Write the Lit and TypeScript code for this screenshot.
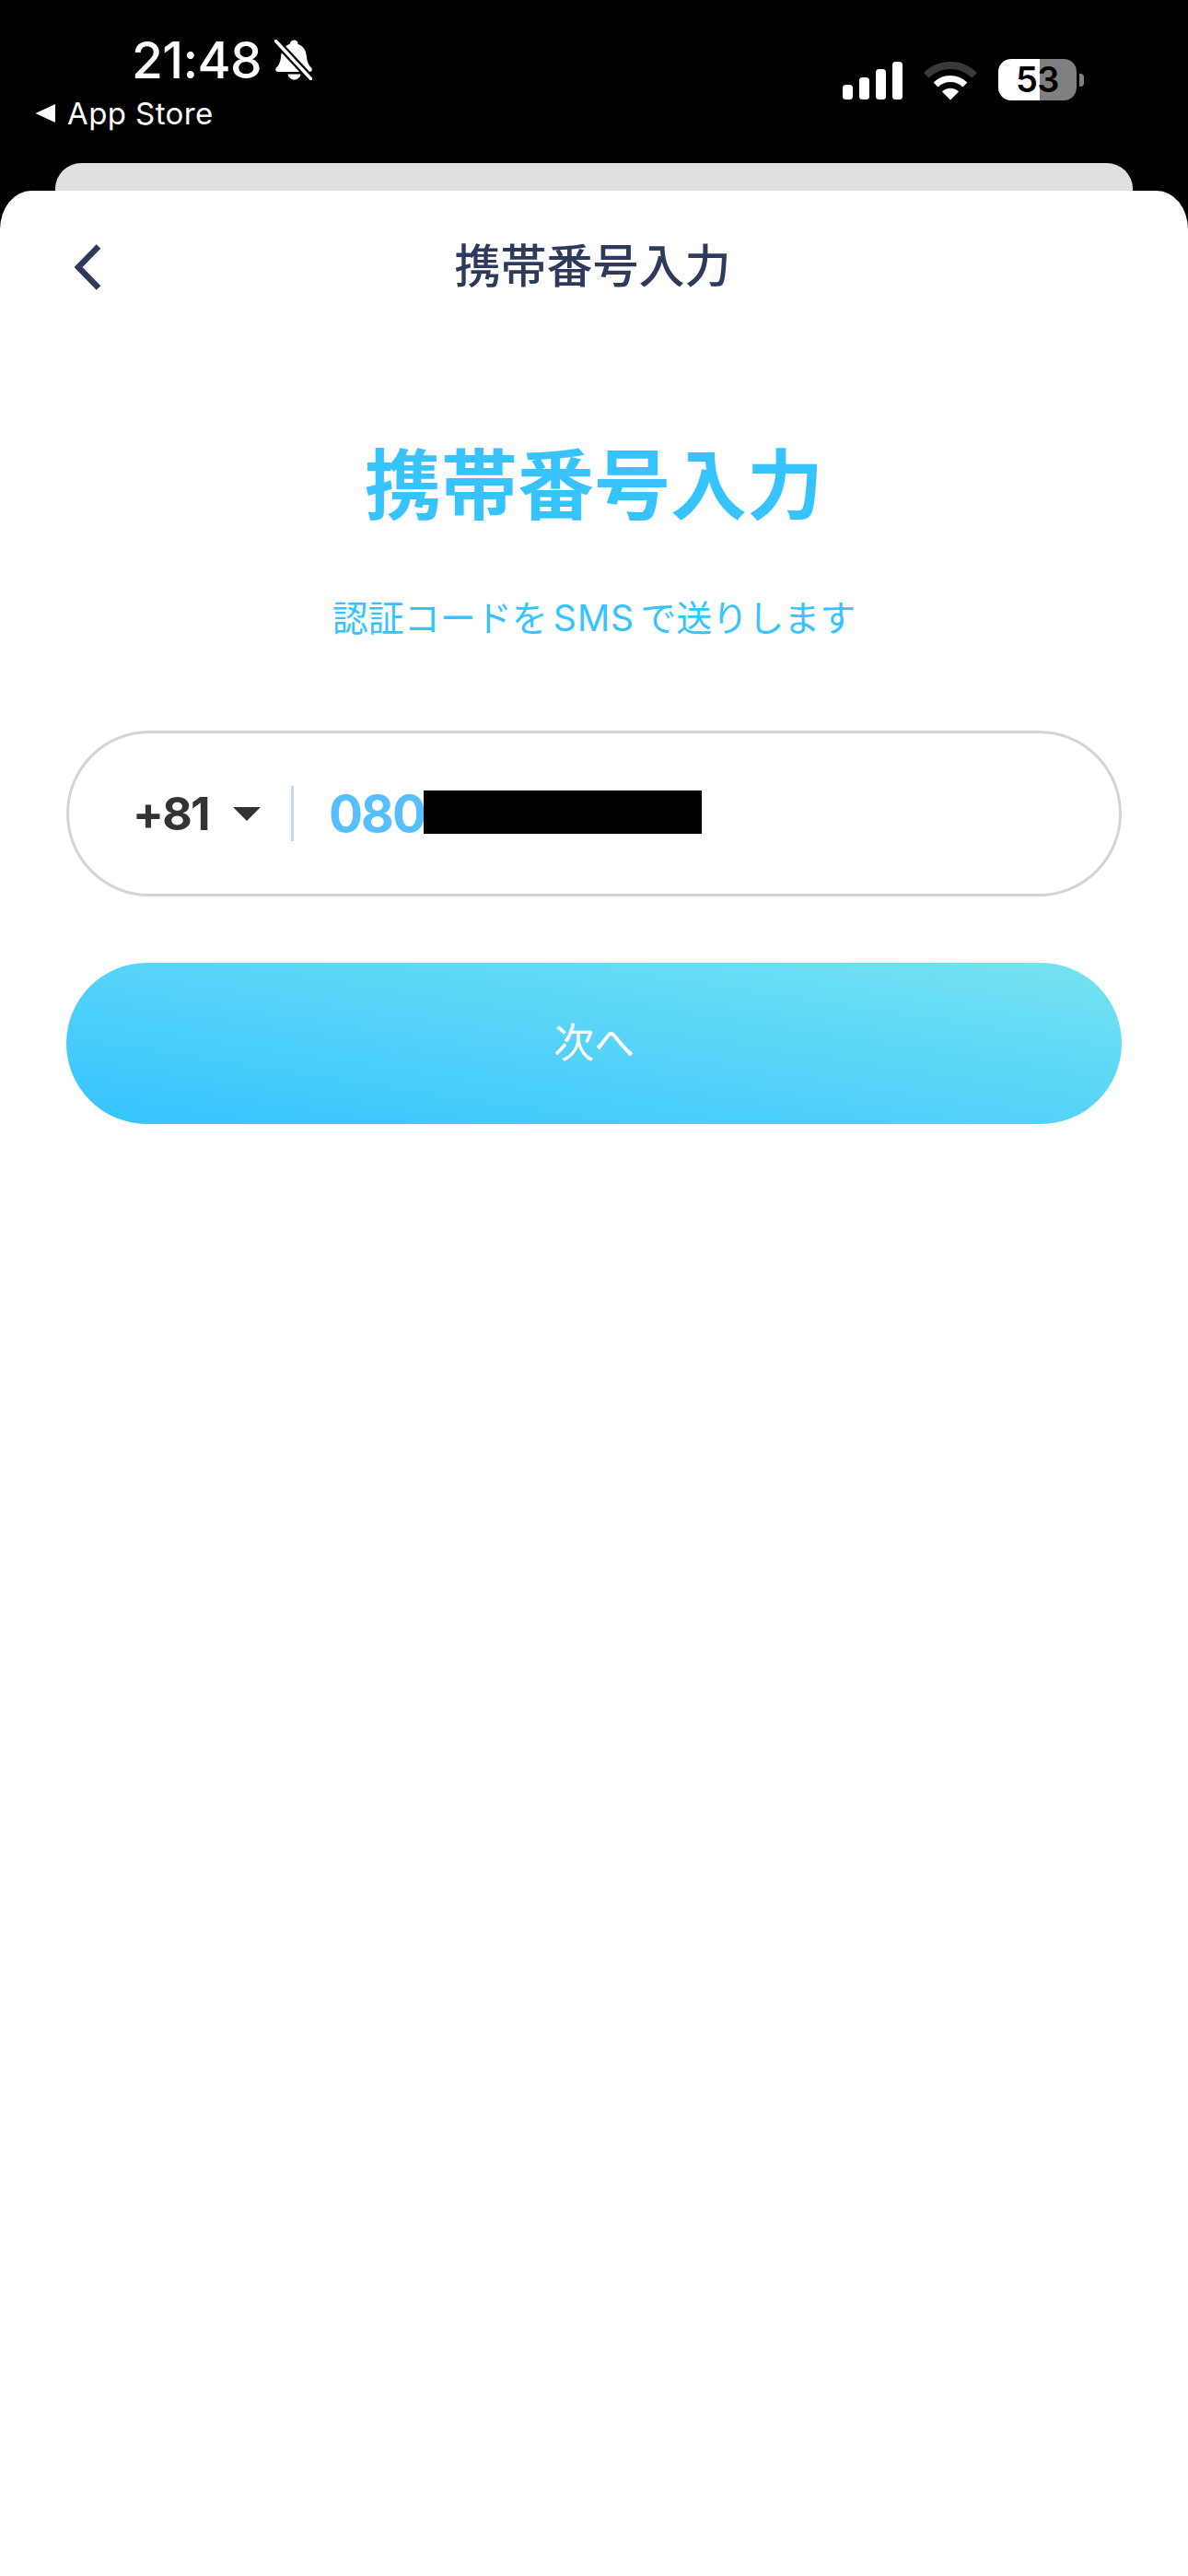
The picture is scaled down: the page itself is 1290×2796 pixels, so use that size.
import { LitElement, html, css } from "lit";
import { customElement } from "lit/decorators.js";

@customElement("app-root")
export class AppRoot extends LitElement {
  static styles = css`
    :host { display: block; width: 1290px; height: 2796px; background: #000; overflow: hidden; font-family: Inter, "Noto Sans CJK JP", sans-serif; }
    * { box-sizing: border-box; }
    .page { height: 2796px; display: flex; flex-direction: column; }
    .status { height: 177px; padding: 43px 113px 0 38px; display: flex; justify-content: space-between; align-items: flex-start; color: #fff; }
    .left { display: flex; flex-direction: column; }
    .time-row { display: flex; align-items: center; margin-left: 105px; height: 44px; gap: 14px; }
    .time { font-size: 55px; line-height: 44px; font-weight: 500; letter-spacing: -0.6px; }
    .back-row { display: flex; align-items: center; height: 30px; margin-top: 21px; gap: 13px; }
    .back-row span { font-size: 33px; line-height: 30px; font-weight: 400; letter-spacing: 0.4px; }
    .right { display: flex; align-items: center; margin-top: 21px; height: 45px; }
    .signal { margin-right: 23px; margin-top: 2px; }
    .wifi { margin-right: 23px; margin-top: 2px; }
    .battery { width: 85px; height: 45px; border-radius: 14px; background: linear-gradient(90deg, #fff 53%, #808080 53%); color: #000; font-size: 38px; font-weight: 600; line-height: 45px; text-align: center; letter-spacing: -0.5px; }
    .nub { width: 5px; height: 14px; margin-left: 3px; border-radius: 0 4px 4px 0; background: #808080; }
    .rear { height: 30px; margin: 0 60px; background: #e0e0e0; border-radius: 28px 28px 0 0; }
    .sheet { flex: 1; background: #fff; border-radius: 34px 34px 0 0 / 42px 42px 0 0; padding: 0 72px; display: flex; flex-direction: column; }
    .nav { height: 166px; display: grid; grid-template-columns: 1fr auto 1fr; align-items: center; margin: 0 -72px; padding: 0 84px 0 81px; }
    .nav-title { font-family: "Noto Sans CJK JP", sans-serif; font-size: 50px; font-weight: 500; color: #2d3a5c; line-height: 60px; padding-bottom: 10px; }
    h1 { margin: 98px 0 0; font-family: "Noto Sans CJK JP", sans-serif; font-size: 83px; line-height: 100px; font-weight: 700; color: #36c3ff; text-align: center; }
    .sub { margin-top: 72px; font-family: "Noto Sans CJK JP", sans-serif; font-size: 39px; line-height: 50px; font-weight: 400; color: #36c3ff; text-align: center; }
    .sub .lat { font-family: Inter, sans-serif; margin: 0 6px; letter-spacing: 1px; }
    .input { margin: 97px 0 0; height: 180px; border: 3px solid #d4d4d4; border-radius: 90px; display: flex; align-items: center; padding-left: 69px; }
    .cc { font-size: 50px; font-weight: 700; color: #333; line-height: 60px; width: 109px; letter-spacing: -1.8px; }
    .caret { margin-right: 33px; }
    .divider { width: 3px; height: 60px; background: #c5d8ea; margin-right: 38px; }
    .num { font-size: 55px; font-weight: 700; color: #55bfff; line-height: 60px; letter-spacing: -2px; }
    .redact { width: 302px; height: 47px; background: #000; margin: 0 0 3px -1px; }
    .btn { margin-top: 72px; height: 175px; border-radius: 88px; background: linear-gradient(to top right, #36c3ff 0%, #75e3f1 100%); display: flex; align-items: center; justify-content: center; padding-bottom: 8px; color: #fff; font-family: "Noto Sans CJK JP", sans-serif; font-size: 44px; font-weight: 400; }
  `;

  render() {
    return html`
      <div class="page">
        <div class="status">
          <div class="left">
            <div class="time-row">
              <span class="time">21:48</span>
              <svg width="41" height="44" viewBox="0 0 41 44" fill="#fff">
                <path d="M21.500 .5c-2.500 0-4.500 1.800-4.800 4.200C10 7 7.500 12.500 7 19c-.4 5-2 8.500-5 11.500-1.500 1.500-1 4.500 2 4.500H38c3 0 3.500-3 2-4.500-3-3-4.600-6.500-5-11.500-.5-6.500-3-12-9.700-14.300C25.900 2.300 24 .5 21.500 .5z"/>
                <path d="M14.500 37.500h14c-.5 3.500-3.500 6-7 6s-6.500-2.500-7-6z"/>
                <path d="M-2 -2L43 46" stroke="#000" stroke-width="8" fill="none"/>
                <path d="M1.500 1.500L39.500 42.500" stroke="#fff" stroke-width="3.500" stroke-linecap="round" fill="none"/>
              </svg>
            </div>
            <div class="back-row">
              <svg width="22" height="20" viewBox="0 0 22 20"><path d="M0.500 10L21 0.500C22 0 22 0.500 22 1.500V18.500C22 19.500 22 20 21 19.500Z" fill="#fff"/></svg>
              <span>App Store</span>
            </div>
          </div>
          <div class="right">
            <svg class="signal" width="65" height="41" viewBox="0 0 65 41" fill="#fff">
              <rect x="0" y="25" width="11" height="16" rx="3.500"/>
              <rect x="18" y="17" width="11" height="24" rx="3.500"/>
              <rect x="36" y="8" width="11" height="33" rx="3.500"/>
              <rect x="54" y="0" width="11" height="41" rx="3.500"/>
            </svg>
            <svg class="wifi" width="58" height="42" viewBox="0 0 58 42" fill="none">
              <path d="M2.800 14.800A37 37 0 0 1 55.200 14.800" stroke="#3a3a3a" stroke-width="8"/>
              <path d="M13.100 25.100A22.500 22.500 0 0 1 44.900 25.100" stroke="#fff" stroke-width="7"/>
              <path d="M29 41.500L20 32.500A12.700 12.700 0 0 1 38 32.500Z" fill="#fff"/>
            </svg>
            <div class="battery">53</div>
            <div class="nub"></div>
          </div>
        </div>
        <div class="rear"></div>
        <div class="sheet">
          <div class="nav">
            <svg width="29" height="50" viewBox="0 0 29 50" fill="none"><path d="M26 2.500L4 25L26 47.500" stroke="#2d3a5c" stroke-width="6.500"/></svg>
            <div class="nav-title">携帯番号入力</div>
            <span></span>
          </div>
          <h1>携帯番号入力</h1>
          <div class="sub">認証コードを<span class="lat">SMS</span>で送りします</div>
          <div class="input">
            <span class="cc">+81</span>
            <svg class="caret" width="30" height="15" viewBox="0 0 30 15"><path d="M0 0H30L15 15Z" fill="#333"/></svg>
            <span class="divider"></span>
            <span class="num">080</span>
            <span class="redact"></span>
          </div>
          <div class="btn">次へ</div>
        </div>
      </div>
    `;
  }
}
